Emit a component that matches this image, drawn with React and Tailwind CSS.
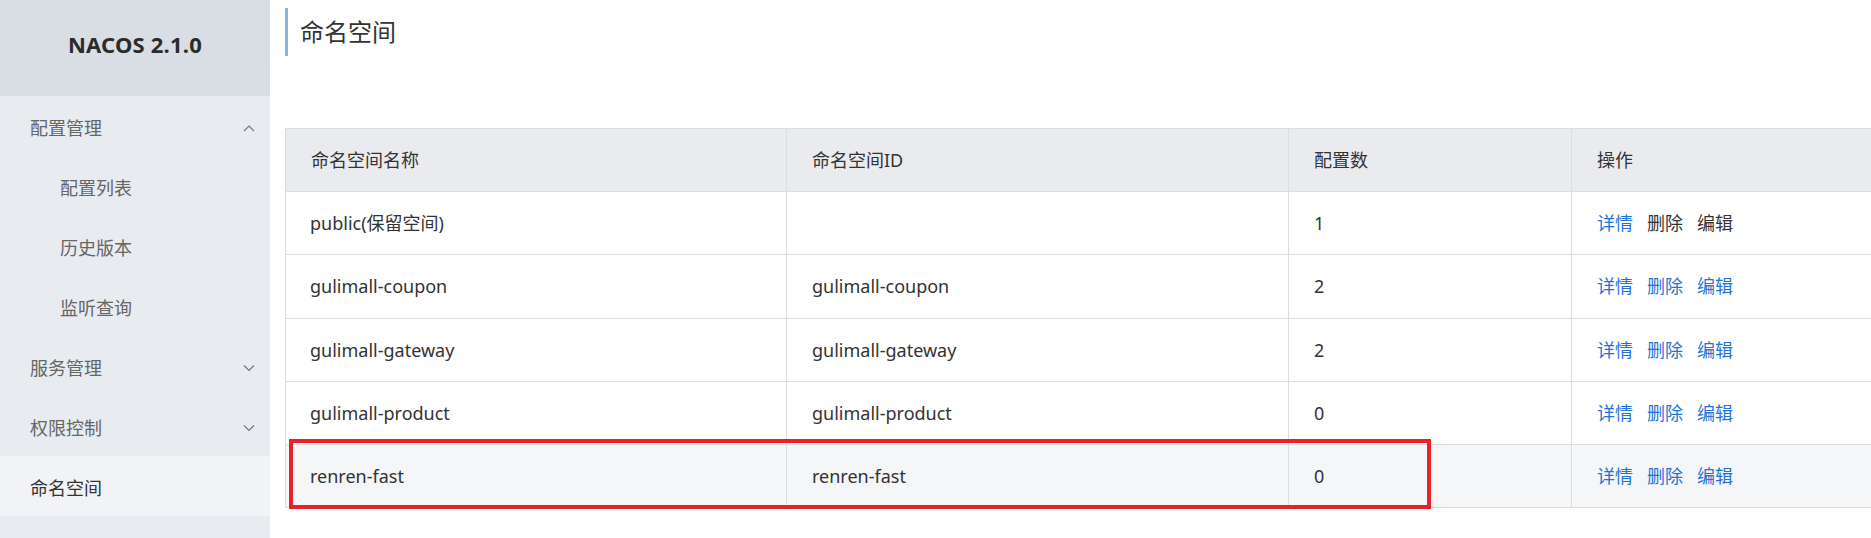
import React from "react";

const FONT = { fontFamily: '"Noto Sans", "Noto Sans CJK SC", sans-serif' };

function Chevron({ up }) {
  return (
    <svg width="12" height="8" viewBox="0 0 12 8" fill="none" className="text-[#777]">
      <path
        d={up ? "M1 7 L6 2 L11 7" : "M1 1.5 L6 6.5 L11 1.5"}
        stroke="currentColor"
        strokeWidth="1.2"
        fill="none"
      />
    </svg>
  );
}

const menu = [
  { label: "配置管理", level: 1, chevron: "up" },
  { label: "配置列表", level: 2 },
  { label: "历史版本", level: 2 },
  { label: "监听查询", level: 2 },
  { label: "服务管理", level: 1, chevron: "down" },
  { label: "权限控制", level: 1, chevron: "down" },
  { label: "命名空间", level: 1, active: true },
];

const rows = [
  { name: "public(保留空间)", id: "", count: "1", h: "h-[63px]", firstDark: true },
  { name: "gulimall-coupon", id: "gulimall-coupon", count: "2", h: "h-[64px]" },
  { name: "gulimall-gateway", id: "gulimall-gateway", count: "2", h: "h-[63px]" },
  { name: "gulimall-product", id: "gulimall-product", count: "0", h: "h-[63px]" },
  { name: "renren-fast", id: "renren-fast", count: "0", h: "h-[63px]", shaded: true },
];

export default function App() {
  return (
    <div className="relative flex h-[538px] w-[1871px] overflow-hidden bg-white" style={FONT}>
      {/* Sidebar */}
      <aside className="flex w-[270px] shrink-0 flex-col bg-[#e8ebf0]">
        <div className="flex h-[96px] items-center justify-center bg-[#d9dde4] pb-[8px]">
          <span className="text-[22px] font-bold tracking-[0.2px] text-[#2b2b2b]">NACOS 2.1.0</span>
        </div>
        <nav className="flex flex-col">
          {menu.map((m) => (
            <div
              key={m.label}
              className={
                "flex h-[60px] items-center justify-between pr-[15px] pt-[4px] text-[18px] " +
                (m.level === 1 ? "pl-[30px] " : "pl-[60px] ") +
                (m.active ? "bg-[#f1f3f6] text-[#333]" : "text-[#666]")
              }
            >
              <span>{m.label}</span>
              {m.chevron && <Chevron up={m.chevron === "up"} />}
            </div>
          ))}
        </nav>
      </aside>

      {/* Main */}
      <main className="flex min-w-0 flex-1 flex-col pl-[15px]">
        <div className="mt-[8px] flex h-[48px] items-center border-l-[3px] border-[#8ab6de] pl-[12px]">
          <h1 className="text-[24px] font-normal text-[#333]">命名空间</h1>
        </div>

        <div className="mt-[72px] w-[1900px] border-l border-t border-[#dcdde2] text-[18px] text-[#333]">
          <div className="grid grid-cols-[501px_502px_283px_611px] bg-[#eaebef]">
            {["命名空间名称", "命名空间ID", "配置数", "操作"].map((h) => (
              <div
                key={h}
                className="flex h-[63px] items-center border-b border-r border-[#dcdde2] pl-[25px]"
              >
                {h}
              </div>
            ))}
          </div>
          {rows.map((r) => (
            <div
              key={r.name}
              className={
                "grid grid-cols-[501px_502px_283px_611px] " + (r.shaded ? "bg-[#f5f6f8]" : "bg-white")
              }
            >
              <div className={"flex items-center border-b border-r border-[#dcdde2] pl-[24px] " + r.h}>
                {r.name}
              </div>
              <div className={"flex items-center border-b border-r border-[#dcdde2] pl-[25px] " + r.h}>
                {r.id}
              </div>
              <div className={"flex items-center border-b border-r border-[#dcdde2] pl-[25px] " + r.h}>
                {r.count}
              </div>
              <div className={"flex items-center gap-[14px] border-b border-r border-[#dcdde2] pl-[25px] " + r.h}>
                <span className="text-[#1f74d6]">详情</span>
                <span className={r.firstDark ? "text-[#333]" : "text-[#1f74d6]"}>删除</span>
                <span className={r.firstDark ? "text-[#333]" : "text-[#1f74d6]"}>编辑</span>
              </div>
            </div>
          ))}
        </div>
      </main>

      {/* Red annotation box */}
      <div className="pointer-events-none absolute left-[289px] top-[439px] h-[70px] w-[1142px] border-[4px] border-[#e8202a]" />
    </div>
  );
}
